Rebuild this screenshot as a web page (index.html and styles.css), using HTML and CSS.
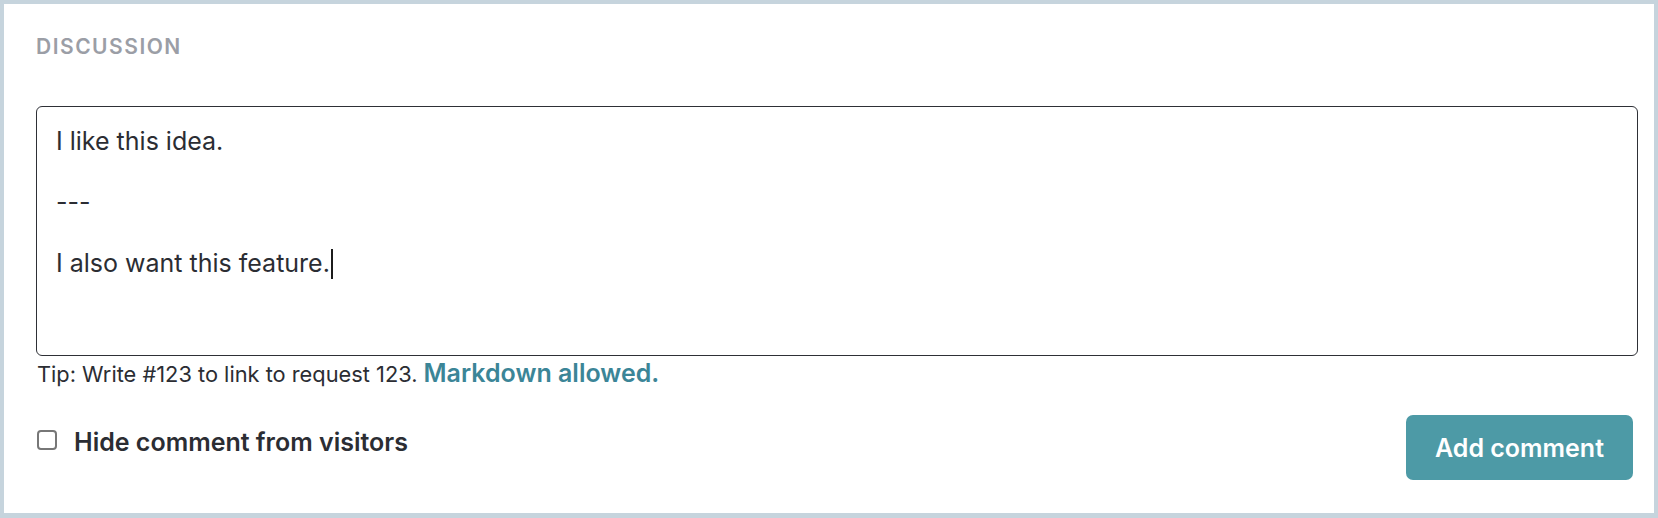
FILE: index.html
```html
<!DOCTYPE html>
<html lang="en">
<head>
    <meta charset="UTF-8">
    <meta name="viewport" content="width=device-width, initial-scale=1.0">
    <title>Discussion</title>
    <link rel="stylesheet" href="styles.css">
</head>
<body>
    <section class="panel">
        <h2 class="panel-title">Discussion</h2>

        <!-- Comment editor -->
        <div class="comment-box">
            <p>I like this idea.</p>
            <p>---</p>
            <p>I also want this feature.<span class="caret"></span></p>
        </div>
        <p class="tip">Tip: Write #123 to link to request 123. <a href="#" class="tip-link">Markdown allowed.</a></p>

        <div class="comment-actions">
            <label class="hide-option">
                <span class="checkbox"></span>
                Hide comment from visitors
            </label>
            <button class="add-button">Add comment</button>
        </div>
    </section>
</body>
</html>
```

FILE: styles.css
```css
body {
    font-family: Inter, "Noto Sans", sans-serif;
    background-color: #fff;
    margin: 0;
    padding: 0;
}

.panel {
    height: 518px;
    box-sizing: border-box;
    border: 4px solid #c6d4dd;
    border-bottom-width: 5px;
    padding: 31px 16px 0 32px;
    background-color: #fff;
}

.panel-title {
    margin: 0 0 47px 0;
    font-size: 21px;
    line-height: 24px;
    font-weight: 600;
    letter-spacing: 1.5px;
    text-transform: uppercase;
    color: #9b9ea6;
}

.comment-box {
    height: 250px;
    box-sizing: border-box;
    border: 1px solid #2e3036;
    border-radius: 6px;
    padding: 19px 19px;
    color: #2b2d33;
    font-size: 25px;
    line-height: 30.4px;
}

.comment-box p {
    margin: 0 0 30.4px;
}

.caret {
    display: inline-block;
    width: 2px;
    height: 30px;
    margin-left: 1px;
    vertical-align: -7px;
    background-color: #1c1c1c;
}

.tip {
    margin: 4px 0 0 1px;
    font-size: 21.8px;
    line-height: 26px;
    color: #2b2d33;
}

.tip-link {
    color: #3b8597;
    font-size: 25px;
    font-weight: 600;
    text-decoration: none;
}

.comment-actions {
    display: flex;
    justify-content: space-between;
    align-items: flex-start;
    margin-top: 28px;
}

.hide-option {
    display: flex;
    align-items: center;
    gap: 17px;
    margin: 12px 0 0 1px;
    font-size: 25px;
    font-weight: 600;
    color: #2b2d33;
}

.checkbox {
    width: 16px;
    height: 16px;
    margin-bottom: 4px;
    border: 2px solid #777;
    border-radius: 4px;
}

.add-button {
    margin-right: 5px;
    height: 65px;
    padding: 0 29px;
    border: none;
    border-radius: 7px;
    background-color: #4d9aa6;
    color: #fff;
    font-family: inherit;
    font-size: 25px;
    font-weight: 600;
    cursor: pointer;
}
```
